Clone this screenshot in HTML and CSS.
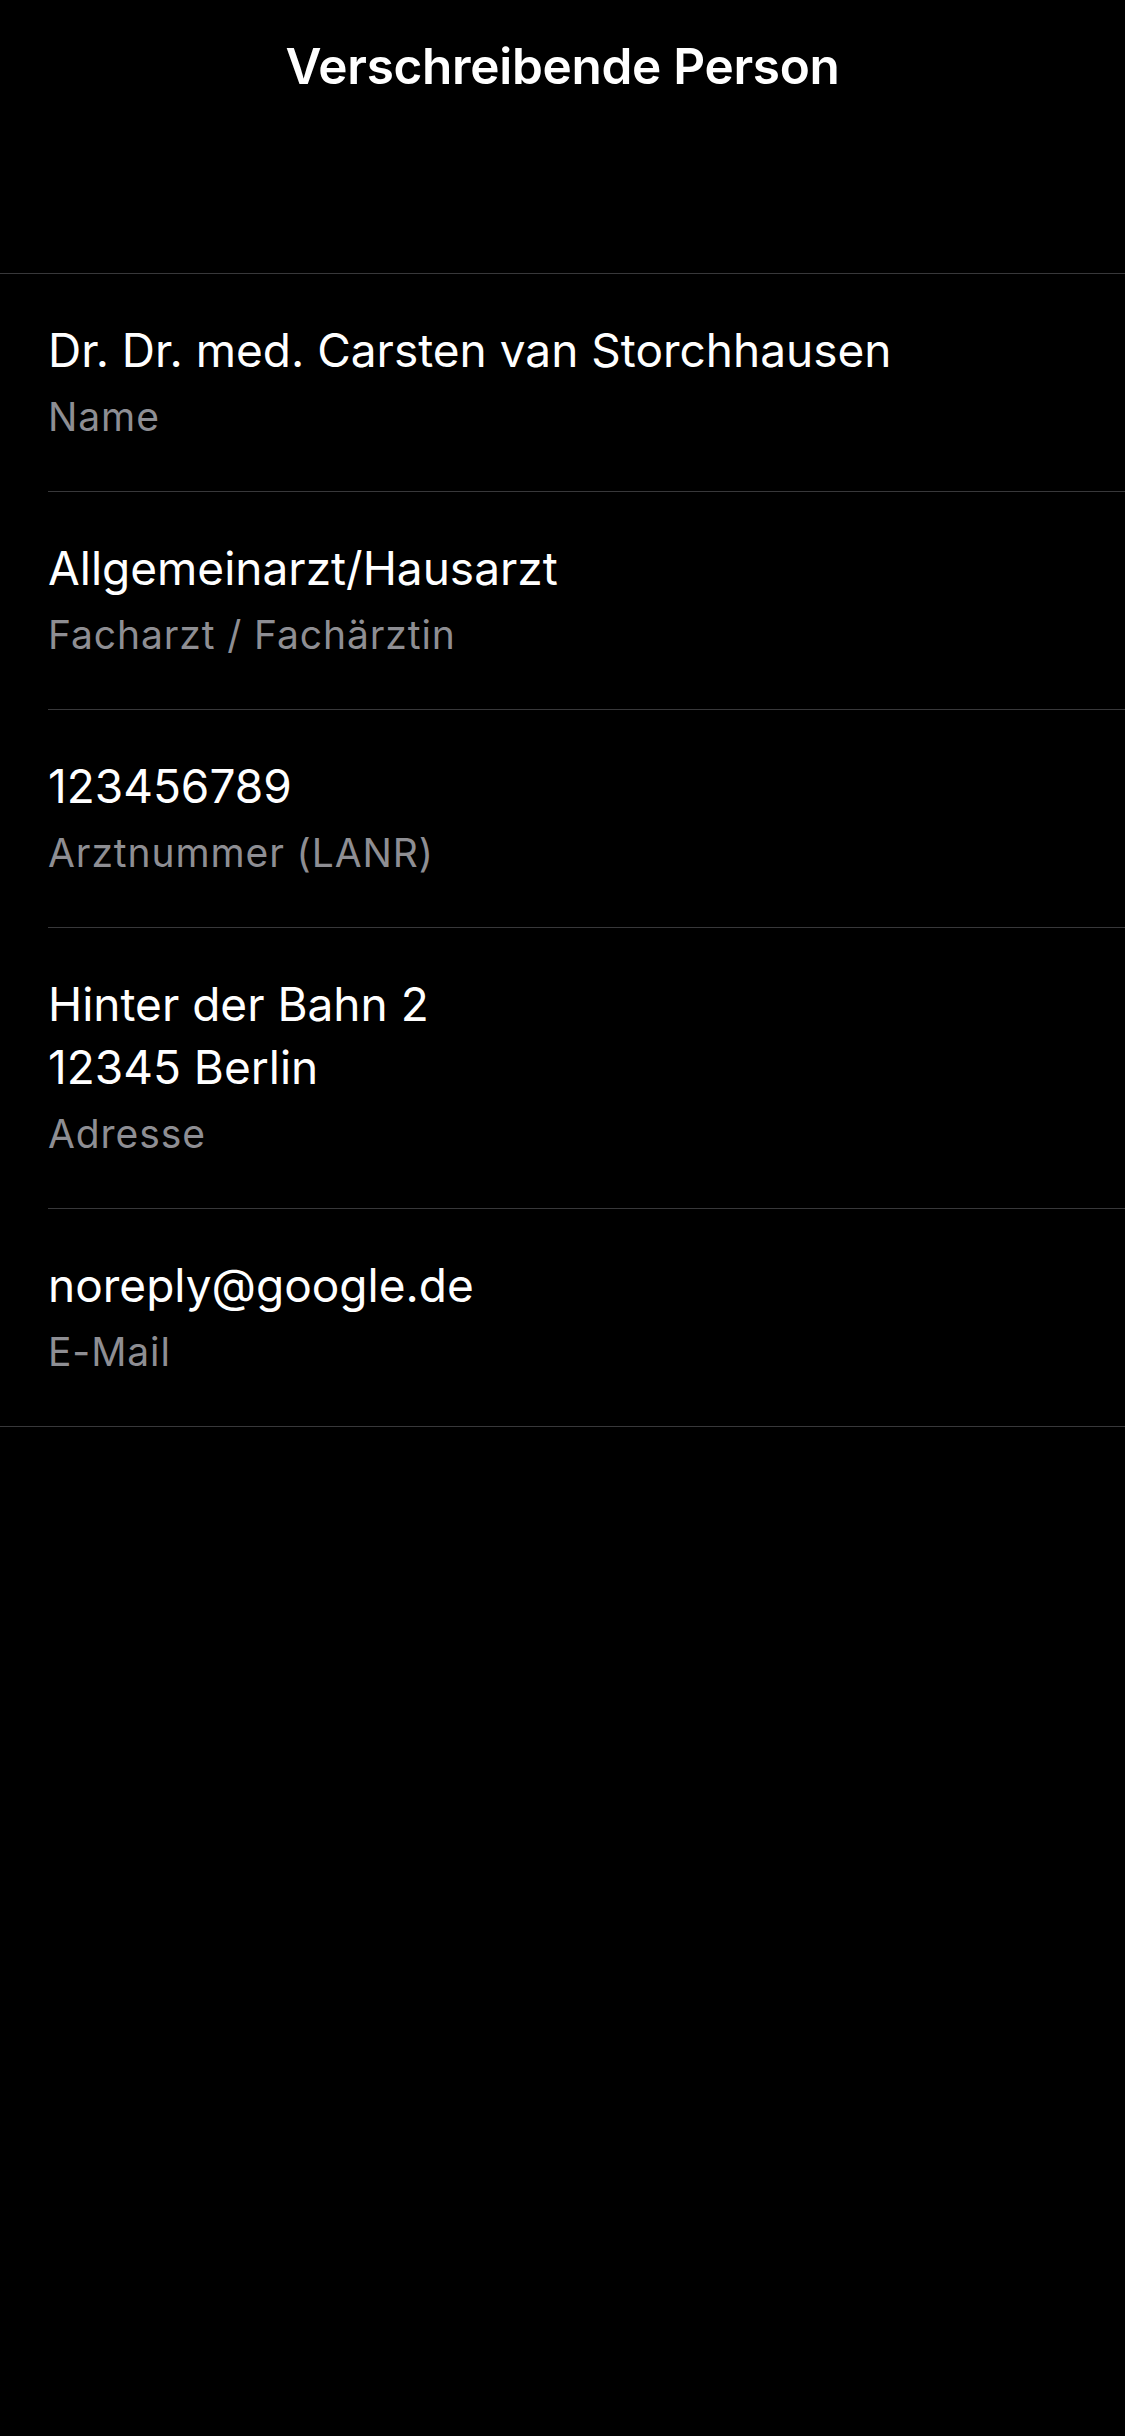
FILE: index.html
```html
<!DOCTYPE html>
<html lang="de">
<head>
<meta charset="utf-8">
<title>Verschreibende Person</title>
<link rel="stylesheet" href="styles.css">
</head>
<body>
<header class="nav">
  <h1 class="nav-title">Verschreibende Person</h1>
</header>
<ul class="list">
  <li class="row">
    <div class="value">Dr. Dr. med. Carsten van Storchhausen</div>
    <div class="label">Name</div>
  </li>
  <li class="row">
    <div class="value">Allgemeinarzt/Hausarzt</div>
    <div class="label">Facharzt / Fachärztin</div>
  </li>
  <li class="row">
    <div class="value">123456789</div>
    <div class="label">Arztnummer (LANR)</div>
  </li>
  <li class="row">
    <div class="value">Hinter der Bahn 2<br>12345 Berlin</div>
    <div class="label">Adresse</div>
  </li>
  <li class="row">
    <div class="value">noreply@google.de</div>
    <div class="label">E-Mail</div>
  </li>
</ul>
</body>
</html>
```

FILE: styles.css
```css
html, body {
  margin: 0;
  padding: 0;
  background: #000;
  color: #fff;
  font-family: Inter, "Noto Sans", sans-serif;
  -webkit-font-smoothing: antialiased;
}
body {
  width: 1125px;
  min-height: 2436px;
}
.nav {
  box-sizing: border-box;
  height: 274px;
  border-bottom: 1px solid #38383a;
}
.nav-title {
  margin: 0;
  padding-top: 36px;
  font-size: 49.5px;
  line-height: 60px;
  font-weight: 600;
  text-align: center;
  letter-spacing: -0.3px;
}
.list {
  list-style: none;
  margin: 0;
  padding: 0;
  border-bottom: 1px solid #38383a;
}
.row {
  margin-left: 48px;
  padding: 45px 0 43px;
  border-bottom: 1px solid #38383a;
}
.row:last-child {
  border-bottom: none;
}
.value {
  font-size: 46px;
  line-height: 63px;
  letter-spacing: 0;
}
.label {
  margin-top: 3px;
  font-size: 39px;
  line-height: 63px;
  letter-spacing: 0.9px;
  color: #8e8e93;
}
```
